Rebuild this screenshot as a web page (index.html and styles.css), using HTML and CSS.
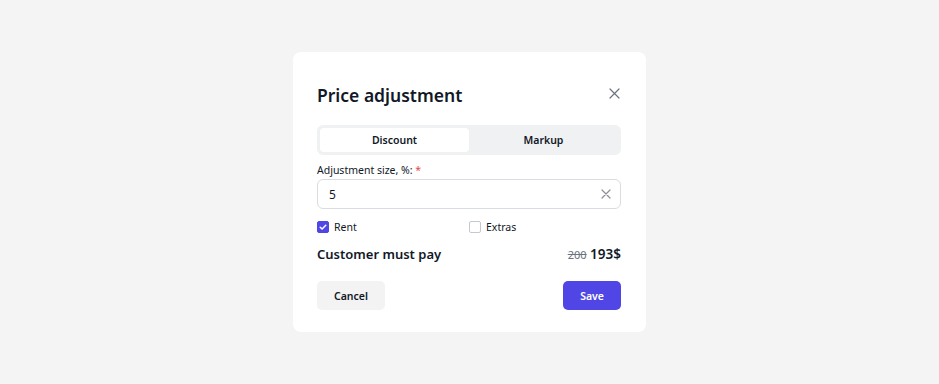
FILE: index.html
```html
<!DOCTYPE html>
<html lang="en">
<head>
    <meta charset="UTF-8">
    <title>Price adjustment</title>
    <link rel="stylesheet" href="styles.css">
</head>
<body>
    <div class="modal">
        <header class="modal-header">
            <h1>Price adjustment</h1>
            <button class="icon-btn" aria-label="Close">
                <svg width="11" height="11" viewBox="0 0 11 11"><path d="M1 1l9 9M10 1L1 10" stroke="#6b7280" stroke-width="1.2" stroke-linecap="round"/></svg>
            </button>
        </header>

        <div class="tabs">
            <button class="tab active">Discount</button>
            <button class="tab">Markup</button>
        </div>

        <label class="field-label">Adjustment size, %: <span class="required">*</span></label>
        <div class="input">
            <span class="input-value">5</span>
            <svg width="10" height="10" viewBox="0 0 10 10"><path d="M1 1l8 8M9 1L1 9" stroke="#8a8f99" stroke-width="1.2" stroke-linecap="round"/></svg>
        </div>

        <div class="checks">
            <label class="check">
                <span class="box checked">
                    <svg width="10" height="10" viewBox="0 0 10 10"><path d="M2.2 5.2l1.9 1.8 3.7-3.8" fill="none" stroke="#fff" stroke-width="1.5" stroke-linecap="round" stroke-linejoin="round"/></svg>
                </span>
                Rent
            </label>
            <label class="check">
                <span class="box"></span>
                Extras
            </label>
        </div>

        <div class="total">
            <span class="total-label">Customer must pay</span>
            <span class="total-price"><s class="old">200</s> 193$</span>
        </div>

        <div class="actions">
            <button class="btn btn-secondary">Cancel</button>
            <button class="btn btn-primary">Save</button>
        </div>
    </div>
</body>
</html>
```

FILE: styles.css
```css
:root {
    --primary: #4f46e5;
    --text: #111827;
    --muted: #6b7280;
    --border: #d9dce1;
    --light-gray: #f4f4f4;
}

* {
    margin: 0;
    padding: 0;
    box-sizing: border-box;
    font-family: 'Noto Sans', 'Open Sans', sans-serif;
}

body {
    background-color: var(--light-gray);
    color: var(--text);
    display: flex;
    justify-content: center;
    padding-top: 52px;
}

.modal {
    width: 353px;
    background-color: #fff;
    border-radius: 8px;
    padding: 26px 25px 22px 24px;
}

.modal-header {
    display: flex;
    justify-content: space-between;
    align-items: center;
    margin-bottom: 13px;
}

h1 {
    font-size: 17.5px;
    font-weight: 600;
    line-height: 34px;
}

.icon-btn {
    background: none;
    border: none;
    display: flex;
    margin: 0 1px 4px 0;
    cursor: pointer;
}

.tabs {
    display: grid;
    grid-template-columns: 1fr 1fr;
    background-color: #f0f1f3;
    border-radius: 6px;
    padding: 3px;
    margin-bottom: 7px;
}

.tab {
    border: none;
    background: none;
    height: 24px;
    border-radius: 4px;
    font-size: 10.5px;
    font-weight: 600;
    color: var(--text);
    cursor: pointer;
}

.tab.active {
    background-color: #fff;
}

.field-label {
    display: block;
    font-size: 10.5px;
    line-height: 16px;
    margin-bottom: 1px;
}

.required {
    color: #e5484d;
}

.input {
    height: 30px;
    border: 1px solid var(--border);
    border-radius: 6px;
    display: flex;
    align-items: center;
    justify-content: space-between;
    padding: 0 9px 0 11px;
    font-size: 12px;
    margin-bottom: 10px;
}

.checks {
    display: grid;
    grid-template-columns: 1fr 1fr;
    margin-bottom: 10px;
}

.check {
    display: flex;
    align-items: center;
    gap: 5px;
    font-size: 10.5px;
    line-height: 16px;
}

.box {
    width: 12px;
    height: 12px;
    border: 1px solid #c4c8cf;
    border-radius: 2px;
    display: flex;
    align-items: center;
    justify-content: center;
}

.box.checked {
    background-color: var(--primary);
    border-color: var(--primary);
}

.total {
    display: flex;
    justify-content: space-between;
    align-items: center;
    margin-bottom: 18px;
}

.total-label {
    font-size: 13px;
    font-weight: 600;
}

.total-price {
    font-size: 13.5px;
    font-weight: 600;
}

.old {
    font-size: 11px;
    font-weight: 400;
    color: var(--muted);
}

.actions {
    display: flex;
    justify-content: space-between;
}

.btn {
    height: 29px;
    border: none;
    border-radius: 5px;
    font-size: 10.5px;
    font-weight: 600;
    padding: 0 17px;
    cursor: pointer;
}

.btn-secondary {
    background-color: #f3f3f3;
    color: var(--text);
}

.btn-primary {
    background-color: var(--primary);
    color: #fff;
}
```
